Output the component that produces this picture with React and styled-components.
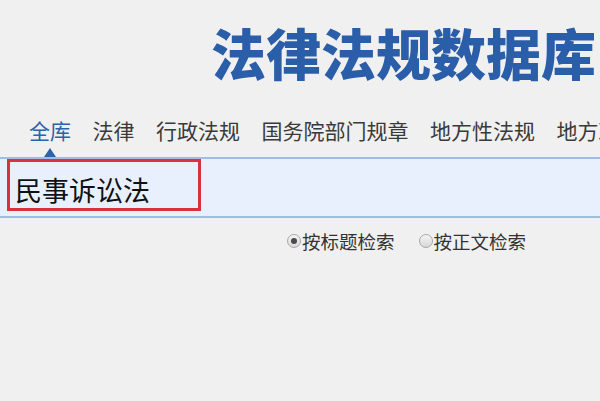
import React from "react";
import styled, { createGlobalStyle } from "styled-components";

const GlobalStyle = createGlobalStyle`
    html, body {
        margin: 0;
        padding: 0;
        background: #f0f0f0;
        font-family: "Noto Sans CJK SC", "Noto Sans", sans-serif;
        overflow: hidden;
    }
`;

const Page = styled.div`
    width: 600px;
    height: 401px;
    background: #f0f0f0;
    overflow: hidden;
`;

const Title = styled.h1`
    margin: 0;
    height: 102px;
    line-height: 102px;
    padding-left: 211px;
    font-size: 55px;
    font-weight: 900;
    color: #2b5ea9;
    white-space: nowrap;
    letter-spacing: 0;
`;

const Nav = styled.nav`
    display: flex;
    align-items: flex-start;
    gap: 21.5px;
    height: 55px;
    box-sizing: border-box;
    padding: 16px 0 0 29px;
    white-space: nowrap;
`;

const NavItem = styled.span`
    position: relative;
    font-size: 21px;
    line-height: 25px;
    color: ${({ active }) => (active ? "#2d62a8" : "#3a3a3a")};
    flex-shrink: 0;

    &::after {
        content: "";
        display: ${({ active }) => (active ? "block" : "none")};
        position: absolute;
        left: 50%;
        top: 30px;
        transform: translateX(-50%);
        border-left: 6px solid transparent;
        border-right: 6px solid transparent;
        border-bottom: 9px solid #2d62a8;
    }
`;

const SearchBand = styled.div`
    height: 57px;
    border-top: 2px solid #9dbde6;
    border-bottom: 2px solid #9dbde6;
    background: #e7f0fc;
    padding-left: 7px;
`;

const SearchBox = styled.div`
    width: 194px;
    height: 52px;
    box-sizing: border-box;
    border: 3px solid #d8323c;
    padding: 12px 0 0 5px;
    font-size: 27px;
    line-height: 32px;
    color: #111;
    white-space: nowrap;
`;

const Options = styled.div`
    display: flex;
    align-items: center;
    gap: 24px;
    padding: 12px 0 0 287px;
`;

const Option = styled.label`
    display: flex;
    align-items: center;
    gap: 1px;
    font-size: 18.5px;
    line-height: 22px;
    color: #333;
    white-space: nowrap;
`;

const Radio = styled.span`
    position: relative;
    width: 12px;
    height: 12px;
    border-radius: 50%;
    border: 1px solid #a9a9a9;
    background: linear-gradient(#f4f4f4, #d8d8d8);

    &::after {
        content: "";
        display: ${({ checked }) => (checked ? "block" : "none")};
        position: absolute;
        left: 3px;
        top: 3px;
        width: 6px;
        height: 6px;
        border-radius: 50%;
        background: #4a4a4a;
    }
`;

const tabs = ["全库", "法律", "行政法规", "国务院部门规章", "地方性法规", "地方政府规章"];

const App = () => {
    return (
        <>
            <GlobalStyle />
            <Page>
                <Title>法律法规数据库</Title>
                <Nav>
                    {tabs.map((tab, i) => (
                        <NavItem key={tab} active={i === 0}>{tab}</NavItem>
                    ))}
                </Nav>
                <SearchBand>
                    <SearchBox>民事诉讼法</SearchBox>
                </SearchBand>
                <Options>
                    <Option><Radio checked />按标题检索</Option>
                    <Option><Radio />按正文检索</Option>
                </Options>
            </Page>
        </>
    );
};

export default App;
